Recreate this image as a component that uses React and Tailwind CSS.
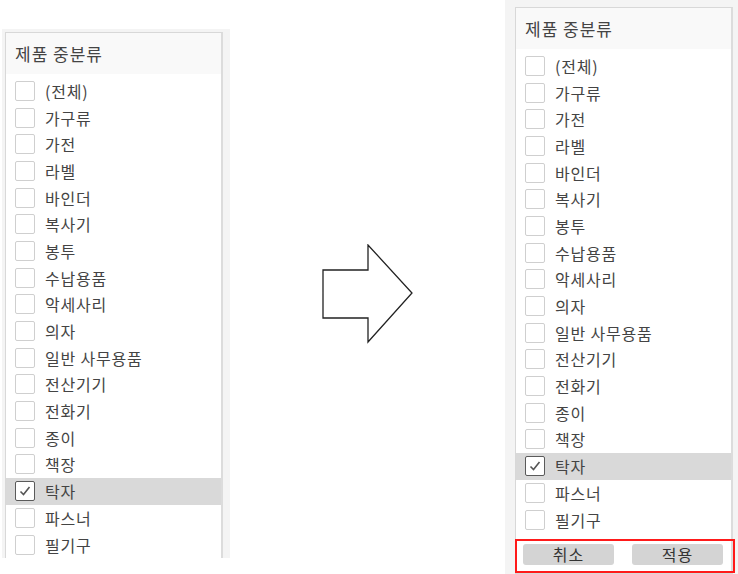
// Filter panel before/after: "제품 중분류" checklist, then the same list with 취소/적용 buttons.

const ITEMS = [
  '(전체)', '가구류', '가전', '라벨', '바인더', '복사기', '봉투', '수납용품', '악세사리',
  '의자', '일반 사무용품', '전산기기', '전화기', '종이', '책장', '탁자', '파스너', '필기구',
];

const FONT = { fontFamily: '"Malgun Gothic", "Noto Sans CJK KR", "Noto Sans", sans-serif' };

function Checkbox({ checked }) {
  if (checked) {
    return (
      <span className="w-[20px] h-[20px] shrink-0 rounded-[2px] border-[1.5px] border-[#5a5a5a] bg-white flex items-center justify-center">
        <svg width="14" height="14" viewBox="0 0 14 14">
          <path d="M2.5 7.5 L5.5 10.5 L11.5 3" fill="none" stroke="#555" strokeWidth="1.6" />
        </svg>
      </span>
    );
  }
  return <span className="w-[20px] h-[20px] shrink-0 rounded-[2px] border border-[#cfcfcf] bg-white" />;
}

function Row({ label, checked }) {
  return (
    <div className={`h-[26.7px] flex items-center pl-[9px] gap-[10px] ${checked ? 'bg-[#d9d9d9]' : ''}`}>
      <Checkbox checked={checked} />
      <span className="text-[16px] text-[#444] leading-none tracking-[0.8px]">{label}</span>
    </div>
  );
}

function Panel({ children }) {
  return (
    <div className="bg-white border border-[#d8d8d8] border-r-2 border-r-[#dcdcdc]" style={FONT}>
      <div className="h-[41px] bg-[#f9f9f9] flex items-center pl-[9px]">
        <span className="text-[17px] text-[#444] tracking-[1px]">제품 중분류</span>
      </div>
      <div className="pt-[3.5px]">
        {ITEMS.map(it => (
          <Row key={it} label={it} checked={it === '탁자'} />
        ))}
      </div>
      {children}
    </div>
  );
}

function BigArrow() {
  return (
    <svg width="92" height="100" viewBox="0 0 92 100" className="shrink-0">
      <polygon
        points="1,26 46,26 46,1 90,49 46,98 46,74 1,74"
        fill="#fff"
        stroke="#222"
        strokeWidth="1.3"
        strokeLinejoin="miter"
      />
    </svg>
  );
}

export default function App() {
  return (
    <div className="w-[738px] h-[574px] bg-white flex items-start overflow-hidden">
      {/* before */}
      <div className="ml-[2px] mt-[29px] w-[228px] h-[529px] overflow-hidden bg-[#f4f4f4] pl-[3px] pr-[7px] pt-[3px]">
        <Panel />
      </div>

      <div className="ml-[92px] mt-[244px]">
        <BigArrow />
      </div>

      {/* after */}
      <div className="ml-[91px] w-[233px] h-[574px] overflow-hidden bg-[#f4f4f4] pl-[10px] pr-[5px] pt-[7px]">
        <Panel>
          <div className="relative mt-[6px] px-[7px] pt-[5px] pb-[8px] flex gap-[18px]" style={FONT}>
            <button className="w-[91px] h-[21px] rounded-[3px] bg-[#d4d4d4] text-[16px] text-[#333] leading-none tracking-[1px]">취소</button>
            <button className="w-[91px] h-[21px] rounded-[3px] bg-[#d4d4d4] text-[16px] text-[#333] leading-none tracking-[1px]">적용</button>
            <div className="absolute left-[-1px] top-0 w-[220px] h-[34px] border-2 border-[#ff1a1a] pointer-events-none" />
          </div>
        </Panel>
      </div>
    </div>
  );
}
